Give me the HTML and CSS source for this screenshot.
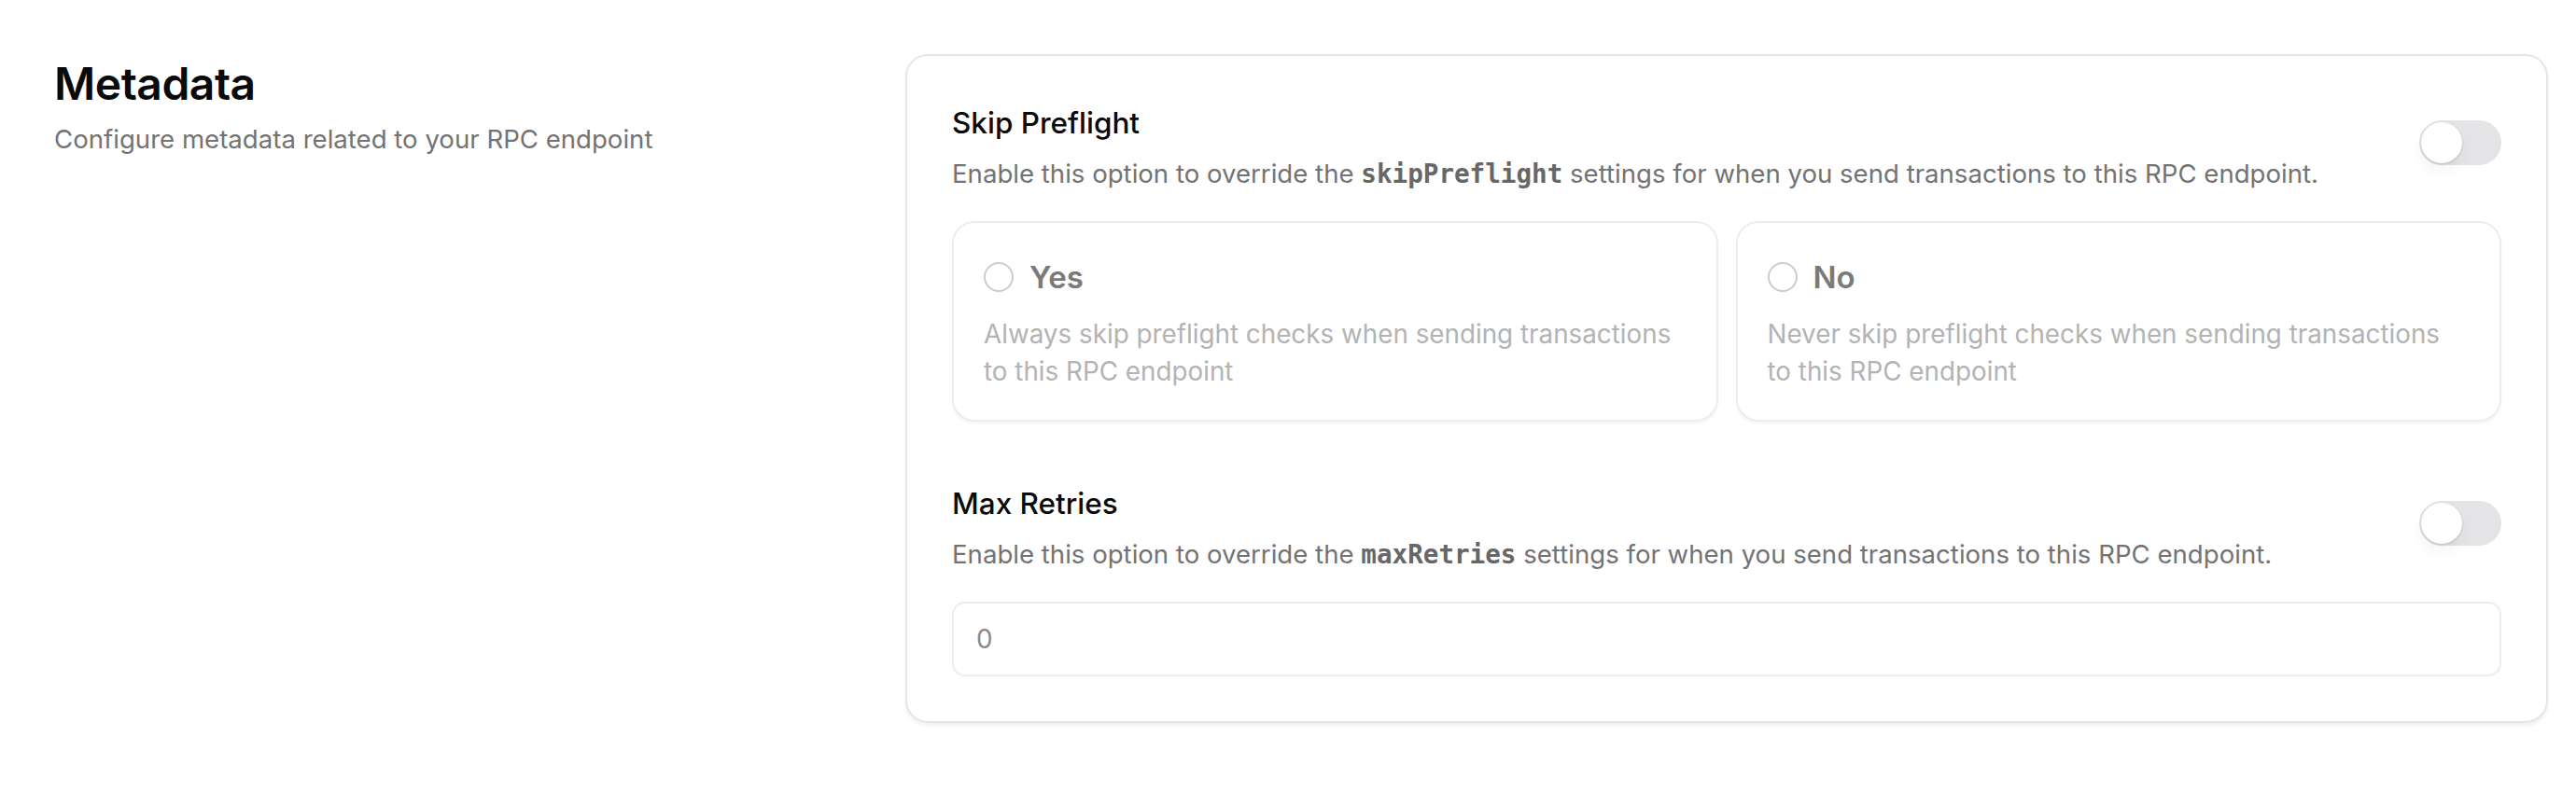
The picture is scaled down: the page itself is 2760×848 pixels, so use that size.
FILE: index.html
```html
<!DOCTYPE html>
<html lang="en">
<head>
<meta charset="utf-8">
<title>Metadata</title>
<link rel="stylesheet" href="styles.css">
</head>
<body>
<main class="page">
  <section class="intro">
    <h1 class="intro-title">Metadata</h1>
    <p class="intro-sub">Configure metadata related to your RPC endpoint</p>
  </section>
  <section class="card">
    <div class="setting">
      <div class="setting-head">
        <div class="setting-text">
          <h2 class="setting-title">Skip Preflight</h2>
          <p class="setting-desc">Enable this option to override the <code class="code">skipPreflight</code> settings for when you send transactions to this RPC endpoint.</p>
        </div>
        <span class="toggle"><span class="thumb"></span></span>
      </div>
      <div class="options">
        <label class="option">
          <span class="option-row"><span class="radio"></span><span class="option-title">Yes</span></span>
          <span class="option-desc">Always skip preflight checks when sending transactions to this RPC endpoint</span>
        </label>
        <label class="option">
          <span class="option-row"><span class="radio"></span><span class="option-title">No</span></span>
          <span class="option-desc">Never skip preflight checks when sending transactions to this RPC endpoint</span>
        </label>
      </div>
    </div>
    <div class="setting">
      <div class="setting-head">
        <div class="setting-text">
          <h2 class="setting-title">Max Retries</h2>
          <p class="setting-desc">Enable this option to override the <code class="code">maxRetries</code> settings for when you send transactions to this RPC endpoint.</p>
        </div>
        <span class="toggle"><span class="thumb"></span></span>
      </div>
      <div class="input"><span class="placeholder">0</span></div>
    </div>
  </section>
</main>
</body>
</html>
```
FILE: styles.css
```css
* { box-sizing: border-box; }
html, body { margin: 0; padding: 0; background: #ffffff; }
body {
  font-family: Inter, "Liberation Sans", sans-serif;
  color: #0a0a0a;
  width: 2760px;
  height: 848px;
}
.page {
  display: grid;
  grid-template-columns: 880px 1760px;
  column-gap: 32px;
  padding: 58px 0 0 58px;
  align-items: start;
}
.intro { padding-top: 3px; }
.intro-title {
  margin: 0;
  font-size: 48px;
  line-height: 58px;
  font-weight: 600;
  letter-spacing: -0.5px;
  color: #0a0a0a;
}
.intro-sub {
  margin: 10px 0 0 0;
  font-size: 27.6px;
  line-height: 40px;
  color: #737373;
}
.card {
  border: 2px solid #e6e6e6;
  border-radius: 24px;
  padding: 52px 48px 48px 48px;
  box-shadow: 0 3px 4px rgba(0,0,0,0.06);
  display: flex;
  flex-direction: column;
  gap: 68px;
}
.setting { display: flex; flex-direction: column; gap: 30px; }
.setting-head {
  display: flex;
  align-items: center;
  justify-content: space-between;
  gap: 32px;
}
.setting-title {
  margin: 0;
  font-size: 31.5px;
  line-height: 40px;
  font-weight: 500;
  color: #0a0a0a;
}
.setting-desc {
  margin: 14px 0 0 0;
  font-size: 27.6px;
  line-height: 40px;
  color: #737373;
}
.code {
  font-family: "DejaVu Sans Mono", "Liberation Mono", monospace;
  font-size: 27.6px;
  font-weight: 600;
  color: #676767;
}
.toggle {
  flex: none;
  width: 88px;
  height: 48px;
  border-radius: 24px;
  background: #e4e4e7;
  padding: 2px;
  display: flex;
  align-items: center;
  margin-top: -14px;
}
.thumb {
  width: 44px;
  height: 44px;
  border-radius: 50%;
  background: #ffffff;
  box-shadow: 0 1px 3px rgba(0,0,0,0.15), 0 10px 15px rgba(0,0,0,0.04);
}
.options {
  display: grid;
  grid-template-columns: 1fr 1fr;
  gap: 19px;
}
.option {
  display: flex;
  flex-direction: column;
  border: 2px solid #ededed;
  border-radius: 24px;
  padding: 32px;
  box-shadow: 0 2px 3px rgba(0,0,0,0.05);
}
.option-row {
  display: flex;
  align-items: center;
  gap: 17px;
  height: 52px;
}
.radio {
  width: 32px;
  height: 32px;
  border-radius: 50%;
  border: 2px solid #cccccc;
  flex: none;
}
.option-title {
  font-size: 33px;
  font-weight: 600;
  color: #7a7a7a;
}
.option-desc {
  margin-top: 15px;
  font-size: 27.8px;
  line-height: 40px;
  color: #b3b3b3;
}
.input {
  height: 80px;
  border: 2px solid #ededed;
  border-radius: 14px;
  padding: 0 24px;
  display: flex;
  align-items: center;
  box-shadow: 0 1px 2px rgba(0,0,0,0.03);
}
.placeholder {
  font-size: 27.8px;
  color: #8a8a8a;
}
```
